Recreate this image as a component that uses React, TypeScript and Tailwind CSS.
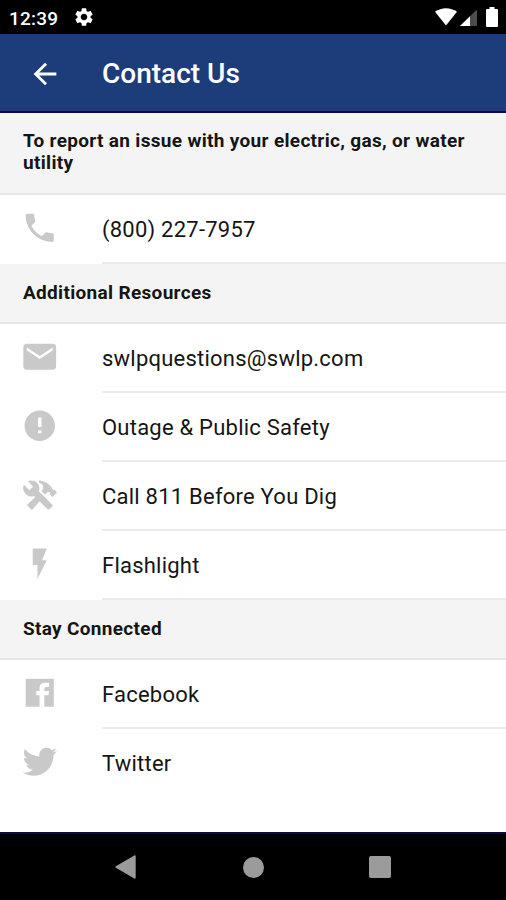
import type { IconType } from 'react-icons';
import { IoLogoTwitter, IoMdAlert, IoMdArrowBack, IoMdCall, IoMdConstruct, IoMdFlash, IoMdMail } from 'react-icons/io';
import { MdSettings } from 'react-icons/md';

interface ContactItem {
  icon: IconType | typeof FacebookIcon;
  label: string;
  iconSize?: number;
}

interface ContactSection {
  title: string;
  items: ContactItem[];
}

function FacebookIcon({ size = 37.5, className }: { size?: number; className?: string }) {
  return (
    <svg width={size} height={size} viewBox="0 0 36 36" fill="currentColor" className={className} aria-hidden="true">
      <path d="M5.3 4.5h25.400q.8 0 .8.8v25.400q0 .8-.8.8H22.400V20.400h4l.5-4.200h-4.500v-2q0-1.800 1.900-1.800h2.600V8.300h-3.800q-5.300 0-5.300 5v2.900h-3.200v4.200h3.200v11.100H5.300q-.8 0-.8-.8V5.300q0-.8.8-.8Z" />
    </svg>
  );
}

const SECTIONS: ContactSection[] = [
  {
    title: 'To report an issue with your electric, gas, or water utility',
    items: [{ icon: IoMdCall, label: '(800) 227-7957' }],
  },
  {
    title: 'Additional Resources',
    items: [
      { icon: IoMdMail, label: 'swlpquestions@swlp.com' },
      { icon: IoMdAlert, label: 'Outage & Public Safety' },
      { icon: IoMdConstruct, label: 'Call 811 Before You Dig', iconSize: 36 },
      { icon: IoMdFlash, label: 'Flashlight' },
    ],
  },
  {
    title: 'Stay Connected',
    items: [
      { icon: FacebookIcon, label: 'Facebook' },
      { icon: IoLogoTwitter, label: 'Twitter' },
    ],
  },
];

function StatusBar() {
  return (
    <div className="flex h-[34px] shrink-0 items-center bg-black pl-[9px] pr-[8px] text-white">
      <span className="pt-[2px] text-[19px] font-medium leading-none tracking-[0.2px]">12:39</span>
      <MdSettings size={22} className="ml-[15px]" aria-hidden="true" />
      <div className="ml-auto flex items-center">
        <svg width="22" height="18" viewBox="0 0 22 18" aria-hidden="true">
          <path d="M0 3.8C6.4-1 15.6-1 22 3.8L11 17.6Z" fill="#fff" />
        </svg>
        <svg width="17" height="18" viewBox="0 0 17 18" className="ml-[3px]" aria-hidden="true">
          <path d="M0 18 17 1.5V18Z" fill="#4d4d4d" />
          <path d="M0 18 10 8.3V18Z" fill="#fff" />
        </svg>
        <svg width="12" height="20" viewBox="0 0 12 20" className="ml-[9px]" aria-hidden="true">
          <path d="M3.5 0h5v2H11q1 0 1 1v16q0 1-1 1H1q-1 0-1-1V3q0-1 1-1h2.5Z" fill="#fff" />
        </svg>
      </div>
    </div>
  );
}

function SectionHeader({ title, first }: { title: string; first: boolean }) {
  return (
    <h2
      className={`border-b-2 border-[#e6e6e6] bg-[#f4f4f4] pl-[23px] pr-6 text-[19px] font-bold leading-[22px] tracking-[0.32px] text-[#151515] ${
        first ? 'pb-[19px] pt-[17px]' : 'py-[18px]'
      }`}
    >
      {title}
    </h2>
  );
}

function ContactRow({ item, last }: { item: ContactItem; last: boolean }) {
  const Icon = item.icon;
  return (
    <li className="flex h-[69px] items-stretch">
      <div className="flex w-[79px] shrink-0 items-center justify-center pb-1">
        <Icon size={item.iconSize ?? 37.5} className="text-[#c9c9c9]" aria-hidden="true" />
      </div>
      <div
        className={`ml-[23px] flex flex-1 items-center border-b-2 pt-0.5 ${last ? 'border-transparent' : 'border-[#ebebeb]'}`}
      >
        <span className="text-[22px] leading-none tracking-[0.23px] text-[#151515]">{item.label}</span>
      </div>
    </li>
  );
}

export default function App() {
  return (
    <div className="flex h-[900px] w-[506px] flex-col overflow-hidden bg-white font-['Roboto',sans-serif]">
      <StatusBar />
      <header className="flex h-[79px] shrink-0 items-center border-b-2 border-[#0b0860] bg-[#1c3d7a] pl-7 pt-0.5 text-white">
        <IoMdArrowBack size={34} aria-label="Back" />
        <h1 className="ml-10 text-[28px] font-medium leading-none">Contact Us</h1>
      </header>

      <main className="flex-1">
        {SECTIONS.map((section, sectionIndex) => (
          <section key={section.title}>
            <SectionHeader title={section.title} first={sectionIndex === 0} />
            <ul>
              {section.items.map((item, index) => (
                <ContactRow
                  key={item.label}
                  item={item}
                  last={sectionIndex === SECTIONS.length - 1 && index === section.items.length - 1}
                />
              ))}
            </ul>
          </section>
        ))}
      </main>

      <nav className="flex h-[68px] shrink-0 items-center border-t-2 border-[#0d0a45] bg-black pl-[115px] text-[#9b9b9b]">
        <svg width="21" height="24" viewBox="0 0 21 24" fill="currentColor" aria-hidden="true">
          <path d="M.8 11.2 19.3.5q1.4-.6 1.4.9v21.2q0 1.5-1.4.9L.8 12.8Q0 12 .8 11.2Z" />
        </svg>
        <div className="ml-[107px] size-[21px] rounded-full bg-[#9b9b9b]" />
        <div className="ml-[105px] size-[22px] rounded-[2px] bg-[#9b9b9b]" />
      </nav>
    </div>
  );
}
